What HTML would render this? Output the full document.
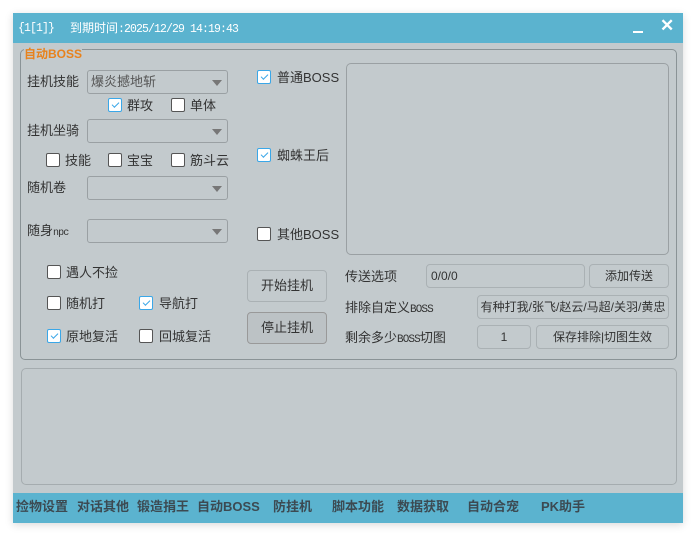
<!DOCTYPE html>
<html><head><meta charset="utf-8"><style>
*{margin:0;padding:0;box-sizing:border-box}
body{width:696px;height:536px;background:#fff;position:relative;overflow:hidden;font-family:"Liberation Sans","Noto Sans CJK SC",sans-serif;font-size:12px;color:#333}
.a{position:absolute}
.win{left:13px;top:13px;width:670px;height:510px;background:#c3cacd;box-shadow:0 2px 8px rgba(0,0,0,.15)}
.title{left:13px;top:13px;width:670px;height:30px;background:#5bb3cf;color:#fff}
.bot{left:13px;top:493px;width:670px;height:30px;background:#5bb3cf;color:#3c4a52;font-weight:bold;font-size:13px}
.bot span{position:absolute;top:7px;line-height:14px}
.grp{left:20px;top:49px;width:657px;height:311px;border:1px solid #8a9396;border-radius:5px}
.lbl{font-size:13px;color:#333;line-height:14px}
.cb{position:absolute;width:14px;height:14px;background:#fff;border:1px solid #555;border-radius:2px}
.cb.c{border-color:#3aa7e8}
.cb.c::after{content:"";position:absolute;left:3px;width:6px;height:3px;border-left:1px solid #3aa7e8;border-bottom:1px solid #3aa7e8;transform:rotate(-45deg);top:3px}
.sel{position:absolute;width:141px;height:24px;border:1px solid #9aa0a3;border-radius:3px}
.sel::after{content:"";position:absolute;right:5px;top:9px;border-left:5px solid transparent;border-right:5px solid transparent;border-top:6px solid #777}
.box{position:absolute;border:1px solid #aab1b4;border-radius:4px;text-align:center;color:#333;font-size:12px}
.mono{font-family:"Liberation Mono","Noto Sans CJK SC",monospace;font-size:11.5px;letter-spacing:-0.9px}
</style></head><body>
<div class="a win"></div>
<div class="a title"><span class="a mono" style="left:5px;top:9px;line-height:13px">{1[1]}</span><span class="a" style="left:57px;top:9px;font-size:12px;line-height:13px">到期时间<span class="mono">:2025/12/29 14:19:43</span></span>
<div class="a" style="left:620px;top:18px;width:10px;height:2px;background:#fff"></div>
<span class="a" style="left:647px;top:3px;font-size:17px;font-weight:bold">✕</span></div>
<div class="a grp"></div>
<span class="a" style="left:24px;top:48px;color:#e8821c;font-weight:bold;font-size:12px;line-height:13px;background:#c3cacd">自动BOSS</span>
<span class="a lbl" style="left:27px;top:75px">挂机技能</span>
<div class="sel" style="left:87px;top:70px"><span class="a" style="left:3px;top:4px;font-size:13px;line-height:14px;color:#555">爆炎撼地斩</span></div>
<div class="cb c" style="left:108px;top:98px"></div><span class="a lbl" style="left:127px;top:99px">群攻</span>
<div class="cb" style="left:171px;top:98px"></div><span class="a lbl" style="left:190px;top:99px">单体</span>
<span class="a lbl" style="left:27px;top:124px">挂机坐骑</span>
<div class="sel" style="left:87px;top:119px"></div>
<div class="cb" style="left:46px;top:153px"></div><span class="a lbl" style="left:65px;top:154px">技能</span>
<div class="cb" style="left:108px;top:153px"></div><span class="a lbl" style="left:127px;top:154px">宝宝</span>
<div class="cb" style="left:171px;top:153px"></div><span class="a lbl" style="left:190px;top:154px">筋斗云</span>
<span class="a lbl" style="left:27px;top:181px">随机卷</span>
<div class="sel" style="left:87px;top:176px"></div>
<span class="a lbl" style="left:27px;top:224px">随身<span class="mono" style="font-size:10px">npc</span></span>
<div class="sel" style="left:87px;top:219px"></div>
<div class="cb c" style="left:257px;top:70px"></div><span class="a lbl" style="left:277px;top:71px">普通BOSS</span>
<div class="cb c" style="left:257px;top:148px"></div><span class="a lbl" style="left:277px;top:149px">蜘蛛王后</span>
<div class="cb" style="left:257px;top:227px"></div><span class="a lbl" style="left:277px;top:228px">其他BOSS</span>
<div class="a" style="left:346px;top:63px;width:323px;height:192px;border:1px solid #9aa0a3;border-radius:5px"></div>
<div class="cb" style="left:47px;top:265px"></div><span class="a lbl" style="left:66px;top:266px">遇人不捡</span>
<div class="cb" style="left:47px;top:296px"></div><span class="a lbl" style="left:66px;top:297px">随机打</span>
<div class="cb c" style="left:139px;top:296px"></div><span class="a lbl" style="left:159px;top:297px">导航打</span>
<div class="cb c" style="left:47px;top:329px"></div><span class="a lbl" style="left:66px;top:330px">原地复活</span>
<div class="cb" style="left:139px;top:329px"></div><span class="a lbl" style="left:159px;top:330px">回城复活</span>
<div class="box" style="left:247px;top:270px;width:80px;height:32px;line-height:30px;font-size:13px">开始挂机</div>
<div class="box" style="left:247px;top:312px;width:80px;height:32px;line-height:30px;font-size:13px;background:#bcc2c5;border-color:#999">停止挂机</div>
<span class="a lbl" style="left:345px;top:270px">传送选项</span>
<div class="box" style="left:426px;top:264px;width:159px;height:24px;line-height:22px;text-align:left;padding-left:4px">0/0/0</div>
<div class="box" style="left:589px;top:264px;width:80px;height:24px;line-height:22px">添加传送</div>
<span class="a lbl" style="left:345px;top:301px">排除自定义<span class="mono" style="font-size:11px">BOSS</span></span>
<div class="box" style="left:477px;top:295px;width:192px;height:24px;line-height:22px;font-size:12px">有种打我/张飞/赵云/马超/关羽/黄忠</div>
<span class="a lbl" style="left:345px;top:331px">剩余多少<span class="mono" style="font-size:11px">BOSS</span>切图</span>
<div class="box" style="left:477px;top:325px;width:54px;height:24px;line-height:22px">1</div>
<div class="box" style="left:536px;top:325px;width:133px;height:24px;line-height:22px">保存排除|切图生效</div>
<div class="a" style="left:21px;top:368px;width:656px;height:117px;border:1px solid #a5acaf;border-radius:5px"></div>
<div class="a bot">
<span style="left:3px">捡物设置</span><span style="left:64px">对话其他</span><span style="left:124px">锻造捐王</span><span style="left:184px">自动BOSS</span><span style="left:260px">防挂机</span><span style="left:319px">脚本功能</span><span style="left:384px">数据获取</span><span style="left:454px">自动合宠</span><span style="left:528px">PK助手</span>
</div>
</body></html>
